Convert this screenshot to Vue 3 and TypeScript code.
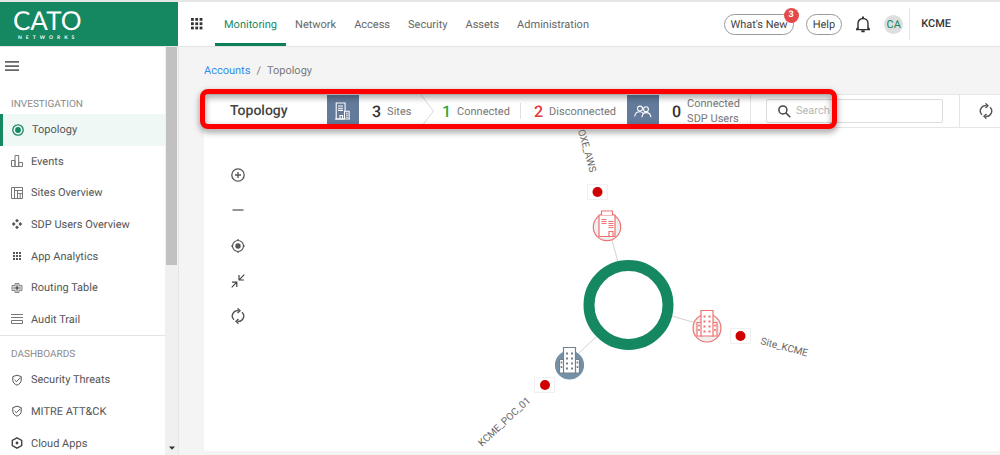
<script setup lang="ts">
import { ref } from 'vue'

interface MenuItem {
  label: string
  icon: string
}

const tabs: string[] = ['Monitoring', 'Network', 'Access', 'Security', 'Assets', 'Administration']
const activeTab = ref('Monitoring')
const activeItem = ref('Topology')
const query = ref('')

const investigation: MenuItem[] = [
  { label: 'Topology', icon: 'target' },
  { label: 'Events', icon: 'bars' },
  { label: 'Sites Overview', icon: 'layout' },
  { label: 'SDP Users Overview', icon: 'diamonds' },
  { label: 'App Analytics', icon: 'dots' },
  { label: 'Routing Table', icon: 'routing' },
  { label: 'Audit Trail', icon: 'rows' },
]
const dashboards: MenuItem[] = [
  { label: 'Security Threats', icon: 'shield' },
  { label: 'MITRE ATT&CK', icon: 'shield' },
  { label: 'Cloud Apps', icon: 'hexagon' },
]
const groups = [
  { title: 'INVESTIGATION', items: investigation, kind: 'seven' },
  { title: 'DASHBOARDS', items: dashboards, kind: 'three' },
]
const steps = [0, 1, 2]
</script>

<template>
  <div class="app">
    <header class="header">
      <a class="logo" href="#" aria-label="Cato Networks">
        <span class="logo-name">CATO</span>
        <span class="logo-sub">NETWORKS</span>
      </a>
      <button class="plain grid-button" type="button" aria-label="Applications">
        <svg width="12" height="12" viewBox="0 0 12 12" fill="#333">
          <template v-for="r in steps" :key="r">
            <rect v-for="c in steps" :key="c" :x="c * 4.3" :y="r * 4.3" width="2.8" height="2.8" />
          </template>
        </svg>
      </button>
      <nav class="tabs" aria-label="Main">
        <a
          v-for="tab in tabs"
          :key="tab"
          href="#"
          :class="['tab', { active: tab === activeTab }]"
          @click.prevent="activeTab = tab"
        >{{ tab }}</a>
      </nav>
      <div class="account">
        <button class="pill news" type="button">What's New<span class="badge">3</span></button>
        <button class="pill help" type="button">Help</button>
        <button class="plain bell" type="button" aria-label="Notifications">
          <svg width="16" height="17" viewBox="0 0 16 17" fill="none" stroke="#333" stroke-width="1.4">
            <path d="M1 13.6h14M3 13.4V7.5C3 4.500 5.200 2.500 8 2.500s5 2 5 5v5.900" />
            <path d="M1.300 13.500l1.900-2M14.700 13.500l-1.900-2" />
            <path d="M8 .6v2M6.300 15.300h3.400" stroke-width="1.900" />
          </svg>
        </button>
        <span class="avatar">CA</span>
        <span class="tenant">KCME</span>
      </div>
    </header>

    <div class="body">
      <aside class="sidebar">
        <div class="menu">
          <button class="plain burger" type="button" aria-label="Toggle menu">
            <svg width="14" height="10" viewBox="0 0 14 10" fill="#666">
              <path d="M0 0h14v1.700H0zM0 4.200h14v1.700H0zM0 8.300h14V10H0z" />
            </svg>
          </button>
          <section v-for="group in groups" :key="group.title" class="group">
            <h2>{{ group.title }}</h2>
            <ul :class="group.kind">
              <li v-for="item in group.items" :key="item.label">
                <a
                  href="#"
                  :class="['entry', { active: item.label === activeItem }]"
                  @click.prevent="activeItem = item.label"
                >
                  <svg width="12" height="12" viewBox="0 0 12 12" fill="none" stroke="#777" stroke-width="1">
                    <g v-if="item.icon === 'target'" stroke="#158761">
                      <circle cx="6" cy="6" r="5.200" stroke-width="1.300" />
                      <circle cx="6" cy="6" r="2.900" fill="#158761" stroke="none" />
                    </g>
                    <path v-else-if="item.icon === 'bars'" d="M.5 11.500v-6h3.500v6zM4 11.500V.5h3.700v11zM7.700 11.500v-4h3.800v4z" />
                    <path v-else-if="item.icon === 'layout'" d="M.5.5h11v11H.5zM3.500.5v11M3.500 3.500h8M6.500 3.500v8M6.500 6.500h2.700v5M9.200 6.500h2.300" />
                    <path
                      v-else-if="item.icon === 'diamonds'"
                      d="M6 .8l1.900 1.900L6 4.600 4.100 2.700zM6 7.400l1.900 1.900L6 11.200 4.100 9.300zM2.700 4.100L4.600 6 2.700 7.900.8 6zM9.300 4.100L11.200 6 9.300 7.900 7.400 6z"
                      fill="#555"
                      stroke="none"
                    />
                    <g v-else-if="item.icon === 'dots'" fill="#555" stroke="none">
                      <template v-for="r in steps" :key="r">
                        <rect v-for="c in steps" :key="c" :x="2 + c * 3" :y="2 + r * 3" width="2" height="2" />
                      </template>
                    </g>
                    <g v-else-if="item.icon === 'routing'" stroke="#888">
                      <path d="M4 1.500h4v2h3v5H8v2H4v-2H1v-5h3z" fill="#d8d8d8" />
                      <path d="M6 2.500v7M2 6h8" />
                      <circle cx="6" cy="6" r="1.400" fill="#555" stroke="none" />
                    </g>
                    <path v-else-if="item.icon === 'rows'" d="M0 1.500h12M0 4.500h12M.5 7.500h11v3H.5z" />
                    <g v-else-if="item.icon === 'shield'" stroke="#555">
                      <path d="M6 1.200l4.200 1.400v3.600c0 2.300-1.700 3.900-4.200 5-2.500-1.100-4.200-2.700-4.200-5V2.600z" />
                      <path d="M3.700 6l1.700 1.700 4-4" />
                    </g>
                    <g v-else>
                      <path d="M6 .9l4.700 2.500v5.200L6 11.100 1.300 8.600V3.400z" stroke="#444" stroke-width="1.400" />
                      <circle cx="6" cy="6" r="1.400" fill="#444" stroke="none" />
                    </g>
                  </svg>
                  <span>{{ item.label }}</span>
                </a>
              </li>
            </ul>
          </section>
        </div>
        <div class="scrollbar" aria-hidden="true">
          <div class="thumb"></div>
          <svg width="6" height="4" viewBox="0 0 6 4"><path d="M0 .5h6L3 3.700z" fill="#333" /></svg>
        </div>
      </aside>

      <main class="main">
        <nav class="crumbs" aria-label="Breadcrumb">
          <a href="#">Accounts</a><span>/</span><span>Topology</span>
        </nav>

        <section class="panel">
          <div class="toolbar">
            <h1>Topology</h1>
            <span class="tile">
              <svg width="16" height="18" viewBox="0 0 16 18" fill="none" stroke="#fff" stroke-width="1.100">
                <path d="M9.500 17H1.200V1h8.900v8M3 4h5M3 6.200h5M3 8.400h5M5 17v-3.500h2.500V17" />
                <path d="M9.500 9.200h4.600V17H9.500zM11 11.200h1.800M11 13.200h1.800M11 15.200h1.800M0 17h15" />
              </svg>
            </span>
            <div class="stat sites"><strong>3</strong><span>Sites</span></div>
            <svg class="chevron" width="13" height="32" viewBox="0 0 13 32" fill="none" stroke="#d8d8d8">
              <path d="M0 0l12.500 16L0 32" />
            </svg>
            <div class="stat connected"><strong class="up">1</strong><span>Connected</span></div>
            <span class="rule"></span>
            <div class="stat disconnected"><strong class="down">2</strong><span>Disconnected</span></div>
            <span class="tile">
              <svg width="18" height="13" viewBox="0 0 18 13" fill="none" stroke="#fff" stroke-width="1.100">
                <circle cx="6" cy="3.600" r="2.500" />
                <circle cx="12" cy="4.200" r="2.400" />
                <path d="M.8 11.500c.2-3 2.200-4.700 5-4.700 1.500 0 2.700.6 3.500 1.500M8 12.300c.2-3 1.700-4.700 4.200-4.700s4.500 1.700 4.700 4.700" />
              </svg>
            </span>
            <div class="stat users"><strong>0</strong><span>Connected<br />SDP Users</span></div>
            <label class="search">
              <svg width="13" height="13" viewBox="0 0 13 13" fill="none" stroke="#444" stroke-width="1.500">
                <circle cx="4.900" cy="4.900" r="4" />
                <path d="M7.900 7.900l4.400 4.400" />
              </svg>
              <input v-model="query" type="text" placeholder="Search" aria-label="Search" />
            </label>
            <button class="plain reload" type="button" aria-label="Refresh">
              <svg width="14" height="16" viewBox="0 0 14 16" fill="none" stroke="#555" stroke-width="1.400">
                <path d="M3 11.800A5.300 5.300 0 0 1 7.500 2.700M11 4.200A5.300 5.300 0 0 1 6.500 13.300" />
                <path d="M6.500.4l2.500 2.300-2.500 2.400M7.500 10.900L5 13.300l2.500 2.300" />
              </svg>
            </button>
            <div class="highlight" aria-hidden="true"></div>
          </div>

          <div class="canvas">
            <div class="tools">
              <button class="plain" type="button" aria-label="Zoom in">
                <svg width="14" height="14" viewBox="0 0 14 14" fill="none" stroke="#555" stroke-width="1.300">
                  <circle cx="7" cy="7" r="6.200" /><path d="M7 4v6M4 7h6" />
                </svg>
              </button>
              <button class="plain" type="button" aria-label="Zoom out">
                <svg width="14" height="14" viewBox="0 0 14 14" stroke="#666" stroke-width="1.400"><path d="M1.500 7h11" /></svg>
              </button>
              <button class="plain" type="button" aria-label="Center">
                <svg width="14" height="14" viewBox="0 0 14 14" fill="none" stroke="#555" stroke-width="1.200">
                  <circle cx="7" cy="7" r="5.500" /><circle cx="7" cy="7" r="2.700" fill="#555" stroke="none" />
                  <path d="M7 0v2M7 12v2M0 7h2M12 7h2" />
                </svg>
              </button>
              <button class="plain" type="button" aria-label="Fit">
                <svg width="14" height="14" viewBox="0 0 14 14" fill="none" stroke="#444" stroke-width="1.200">
                  <path d="M13.300.7L8.200 5.800M8 1v5h5M.7 13.300l4.600-4.600M1 8.200h4.800V13" />
                </svg>
              </button>
              <button class="plain" type="button" aria-label="Reload map">
                <svg width="14" height="16" viewBox="0 0 14 16" fill="none" stroke="#555" stroke-width="1.400">
                  <path d="M3 11.800A5.300 5.300 0 0 1 7.500 2.700M11 4.200A5.300 5.300 0 0 1 6.500 13.300" />
                  <path d="M6.500.4l2.500 2.300-2.500 2.400M7.500 10.900L5 13.300l2.500 2.300" />
                </svg>
              </button>
            </div>

            <svg class="map" role="img" aria-label="Network topology">
              <defs>
                <g id="towers">
                  <path d="M-10 -5.500h5V8h-5zM5 -5.500h5V8H5z" />
                  <path d="M-6 -17.500H6V8H-6z" />
                  <path
                    d="M-3.500 -11.500h2M1.500 -11.500h2M-3.500 -6.500h2M1.500 -6.500h2M-3.500 -1.500h2M1.500 -1.500h2M-3.500 3.500h2M1.500 3.500h2M-8.800 -2.500h1.600M7.200 -2.500h1.600M-8.800 2h1.600M7.200 2h1.600"
                    stroke-width="2"
                  />
                </g>
              </defs>
              <g stroke="#d2d2d2">
                <path d="M408 112l6 22M468 188l24 7M392 209l-17 16" />
              </g>
              <circle cx="424.500" cy="177" r="39.500" fill="none" stroke="#158761" stroke-width="11" />

              <g fill="#fff" stroke="#f0f0f0">
                <path d="M383.500 56.500h20v15h-20zM526.500 200.500h20v15h-20zM330.500 249.500h20v15h-20z" />
              </g>
              <g fill="#d00000">
                <circle cx="393.500" cy="64" r="5" />
                <circle cx="536.500" cy="208" r="5" />
                <circle cx="341" cy="257" r="5" />
              </g>

              <g transform="translate(403 99)" fill="none" stroke="#ee7272" stroke-width="1.200">
                <circle r="13.700" fill="#efefef" />
                <path d="M-8 -12H8V9.500H-8z" fill="#fff" />
                <path d="M-5.500 -12v-4h11v4" fill="#fff" />
                <path d="M-5.500 -7.500H-.5M-5.500 -5.500H-.5M-5.500 -3.500H-.5M1.500 -5.500h5M1.500 -3.500h5M1.500 -1.500h5M1.500 .5h5M2 9.500V4.500h4v5" />
              </g>
              <g class="node red" transform="translate(503 200)">
                <circle r="14" /><use href="#towers" />
              </g>
              <g class="node slate" transform="translate(365.500 237)">
                <circle r="14" /><use href="#towers" />
              </g>

              <g class="names">
                <text transform="translate(386 45) rotate(74)" text-anchor="end">OXE_AWS</text>
                <text transform="translate(556 216) rotate(15)">Site_KCME</text>
                <text transform="translate(278 319) rotate(-43)">KCME_POC_01</text>
              </g>
            </svg>
          </div>
        </section>
      </main>
    </div>
  </div>
</template>

<style>
html,
body {
  background: #f4f4f4;
}
</style>

<style scoped>
* {
  box-sizing: border-box;
}
.app {
  display: flex;
  flex-direction: column;
  height: 100vh;
  overflow: hidden;
  font: 11px/14px Roboto, sans-serif;
  text-rendering: geometricPrecision;
  color: #555;
}
button,
input {
  text-rendering: inherit;
}
a {
  color: inherit;
  text-decoration: none;
}
svg {
  display: block;
  flex: none;
}
.plain {
  padding: 0;
  border: 0;
  background: none;
}
.header {
  display: flex;
  flex: none;
  height: 47px;
  border-top: 2px solid #e6e6e6;
  border-bottom: 1px solid #e4e4e4;
  background: #fff;
}
.logo {
  display: flex;
  flex-direction: column;
  width: 178px;
  padding: 3px 0 0 13px;
  background: #158761;
  color: #fff;
}
.logo-name {
  font: 26px/30px Lato, sans-serif;
}
.logo-sub {
  padding-left: 5px;
  font: bold 5px/6px Lato, sans-serif;
  letter-spacing: 4px;
}
.grid-button {
  display: flex;
  align-items: center;
  justify-content: center;
  width: 37px;
}
.tabs {
  display: flex;
}
.tab {
  display: flex;
  align-items: center;
  padding: 4px 9px 0;
  border-bottom: 3px solid transparent;
  color: #666;
}
.tab.active {
  border-color: #0c7f56;
  color: #158761;
}
.account {
  display: flex;
  align-items: center;
  margin-left: auto;
  padding-right: 49px;
}
.pill {
  height: 21px;
  border: 1px solid #999;
  border-radius: 11px;
  background: #fff;
  font: inherit;
  color: #444;
}
.news {
  position: relative;
  padding: 1px 5px 0;
}
.help {
  margin-left: 12px;
  padding: 1px 6px 0;
}
.badge {
  position: absolute;
  top: -7px;
  right: -6px;
  width: 15px;
  height: 15px;
  border-radius: 50%;
  background: #e34b4b;
  font: bold 9px/15px Roboto, sans-serif;
  color: #fff;
}
.bell {
  margin: 0 13px;
}
.avatar {
  width: 19px;
  height: 19px;
  border-radius: 50%;
  background: #dedede;
  line-height: 19px;
  text-align: center;
  color: #158761;
}
.tenant {
  margin-left: 6px;
  padding-left: 11px;
  border-left: 1px solid #e4e4e4;
  font-weight: 500;
  line-height: 32px;
  color: #333;
}
.body {
  display: flex;
  flex: 1;
  min-height: 0;
}
.sidebar {
  display: flex;
  flex: none;
  width: 179px;
  border-right: 1px solid #e6e6e6;
  background: #fff;
}
.menu {
  flex: 1;
  overflow: hidden;
}
.burger {
  display: block;
  padding: 14px 5px 22px;
}
.group h2 {
  margin: 0;
  padding: 2px 11px 0;
  font-size: 10px;
  font-weight: 400;
  line-height: 19px;
  color: #8a8a8a;
}
.group + .group {
  padding-top: 7px;
  border-top: 1px solid #e4e4e4;
}
.group ul {
  display: grid;
  grid-auto-rows: 1fr;
  margin: 0;
  padding: 0;
  list-style: none;
}
.group .seven {
  height: 221px;
}
.group .three {
  height: 95px;
}
.entry {
  display: flex;
  align-items: center;
  gap: 8px;
  height: 100%;
  padding-left: 11px;
}
.entry span {
  padding-top: 1px;
}
.entry.active {
  padding-left: 9px;
  border-left: 3px solid #158761;
  background: #eff8f5;
}
.scrollbar {
  display: flex;
  flex-direction: column;
  align-items: center;
  justify-content: space-between;
  width: 13px;
  padding-bottom: 5px;
  background: #f0f0f0;
}
.thumb {
  width: 11px;
  height: 54%;
  background: #c1c1c1;
}
.main {
  display: flex;
  flex: 1;
  flex-direction: column;
  min-width: 0;
  padding: 0 0 4px 25px;
}
.crumbs {
  display: flex;
  flex: none;
  align-items: center;
  gap: 6px;
  height: 47px;
  color: #777;
}
.crumbs a {
  color: #2f8ee8;
}
.panel {
  display: flex;
  flex: 1;
  flex-direction: column;
  min-height: 0;
  background: #fff;
}
.toolbar {
  position: relative;
  display: flex;
  flex: none;
  align-items: center;
  height: 34px;
  border-top: 1px solid #e6e6e6;
  border-bottom: 1px solid #e6e6e6;
}
.toolbar h1 {
  width: 123px;
  margin: 0;
  padding-left: 26px;
  font-size: 14px;
  font-weight: 500;
  color: #444;
}
.tile {
  display: flex;
  align-items: center;
  justify-content: center;
  width: 32px;
  height: 32px;
  background: #637a9b;
}
.stat {
  display: flex;
  align-items: center;
  gap: 6px;
  color: #777;
  line-height: 15px;
}
.stat strong {
  font-size: 16px;
  font-weight: 500;
  color: #333;
}
.stat .up {
  color: #2fa83a;
}
.stat .down {
  color: #e5393c;
}
.rule {
  height: 16px;
  border-left: 1px solid #e0e0e0;
}
.sites {
  width: 62px;
  padding-left: 13px;
}
.connected {
  width: 86px;
  padding-left: 8px;
}
.disconnected {
  width: 106px;
  padding-left: 13px;
}
.users {
  width: 92px;
  height: 32px;
  padding-left: 13px;
  border-right: 1px solid #e6e6e6;
}
.search {
  display: flex;
  align-items: center;
  gap: 5px;
  width: 177px;
  height: 24px;
  margin-left: 15px;
  padding-left: 11px;
  border: 1px solid #dcdcdc;
  border-radius: 2px;
}
.search input {
  flex: 1;
  min-width: 0;
  padding: 0;
  border: 0;
  outline: 0;
  background: none;
  font: inherit;
  color: #444;
}
.search input::placeholder {
  color: #b8b8b8;
}
.reload {
  height: 32px;
  margin-left: 16px;
  padding-left: 19px;
  border-left: 1px solid #e6e6e6;
}
.highlight {
  position: absolute;
  top: -6px;
  left: -4px;
  width: 637px;
  height: 40px;
  border: 5px solid #fe0000;
  border-radius: 8px;
  filter: drop-shadow(0 3px 3px rgba(0, 0, 0, 0.45));
  pointer-events: none;
}
.canvas {
  position: relative;
  flex: 1;
  min-height: 0;
}
.tools {
  position: absolute;
  top: 37px;
  left: 24px;
  display: flex;
  flex-direction: column;
  justify-content: space-between;
  height: 161px;
}
.tools .plain {
  display: flex;
  align-items: center;
  justify-content: center;
  width: 20px;
  height: 20px;
}
.map {
  width: 100%;
  height: 100%;
}
.node {
  stroke-width: 1.2;
}
.red {
  fill: #fff;
  stroke: #ee7272;
}
.red circle {
  fill: #efefef;
}
.slate {
  fill: #fff;
  stroke: #75818c;
}
.slate circle {
  fill: #7490a6;
  stroke: #7490a6;
}
.names {
  fill: #666;
  font-size: 10px;
}
</style>
